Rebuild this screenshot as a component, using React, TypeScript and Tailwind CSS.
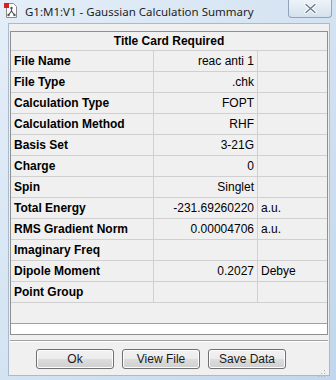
import React from 'react';

type Row = { label: string; value: string; unit?: string };

const rows: Row[] = [
  { label: 'File Name', value: 'reac anti 1' },
  { label: 'File Type', value: '.chk' },
  { label: 'Calculation Type', value: 'FOPT' },
  { label: 'Calculation Method', value: 'RHF' },
  { label: 'Basis Set', value: '3-21G' },
  { label: 'Charge', value: '0' },
  { label: 'Spin', value: 'Singlet' },
  { label: 'Total Energy', value: '-231.69260220', unit: 'a.u.' },
  { label: 'RMS Gradient Norm', value: '0.00004706', unit: 'a.u.' },
  { label: 'Imaginary Freq', value: '' },
  { label: 'Dipole Moment', value: '0.2027', unit: 'Debye' },
  { label: 'Point Group', value: '' },
];

const AppIcon = () => (
  <svg width="14" height="15" viewBox="0 0 14 15">
    <path d="M2.5 0.5h7l3 3v11h-10z" fill="#ffffff" stroke="#8a8a8a" />
    <rect x="0" y="0" width="5" height="5" fill="#d81e1e" />
    <path d="M7.5 5v3M7.5 8l-3 4M7.5 8l3 4" stroke="#555" strokeWidth="1.2" fill="none" />
    <circle cx="7.5" cy="5" r="1.2" fill="#555" />
    <circle cx="4.5" cy="12" r="1.2" fill="#555" />
    <circle cx="10.5" cy="12" r="1.2" fill="#555" />
  </svg>
);

const WinButton = ({ label }: { label: string }) => (
  <button className="w-[78px] h-[20px] rounded-[3px] border border-[#707070] bg-[linear-gradient(to_bottom,#f2f2f2_0%,#ebebeb_50%,#dddddd_51%,#cfcfcf_100%)] text-[12px] text-[#1a1a1a] leading-none shadow-[inset_0_0_0_1px_#fcfcfc]">
    {label}
  </button>
);

const App: React.FC = () => {
  return (
    <div className="w-[336px] h-[380px] overflow-hidden bg-gradient-to-br from-[#e4eef8] via-[#d4e3f2] to-[#c2d7ec] font-['Liberation_Sans',Arial,sans-serif] text-black">
      {/* Title bar */}
      <div className="h-[23px] flex items-start">
        <div className="ml-[4px] mt-[3px]">
          <AppIcon />
        </div>
        <span className="ml-[7px] mt-[4px] text-[11.5px] leading-[16px] font-['Noto_Sans',sans-serif] text-[#1e1e1e]">
          G1:M1:V1 - Gaussian Calculation Summary
        </span>
        <div className="ml-auto mr-[4px] w-[44px] h-[18px] rounded-b-[4px] border border-t-0 border-[#8fa3bb] bg-gradient-to-b from-[#eef3f9] to-[#d5e1ee] flex items-center justify-center">
          <svg width="13" height="11" viewBox="0 0 13 11">
            <path d="M2 1.5L11 9.5M11 1.5L2 9.5" stroke="#ffffff" strokeWidth="3.2" strokeLinecap="round" />
            <path d="M2 1.5L11 9.5M11 1.5L2 9.5" stroke="#6b7a8c" strokeWidth="1.4" strokeLinecap="round" />
          </svg>
        </div>
      </div>

      {/* Client area */}
      <div className="ml-[8px] mr-[6px] h-[353px] bg-[#f0f0f0] border border-[#aab9cb] flex flex-col">
        <div className="mt-[7px] ml-[1px] mr-[1px] h-[304px] shrink-0 border border-[#8e8f8f] flex flex-col bg-[#f0f0f0]">
          <div className="h-[19px] shrink-0 border-b border-[#cfcfcf] flex items-center justify-center text-[12px] font-bold">
            Title Card Required
          </div>
          {rows.map((r) => (
            <div key={r.label} className="h-[21px] shrink-0 border-b border-[#d0d0d0] flex text-[12px]">
              <div className="w-[143px] border-r border-[#d0d0d0] pl-[3px] flex items-center font-bold">
                {r.label}
              </div>
              <div className="w-[104px] border-r border-[#d0d0d0] pr-[3px] flex items-center justify-end">
                {r.value}
              </div>
              <div className="flex-1 pl-[3px] flex items-center">{r.unit ?? ''}</div>
            </div>
          ))}
          <div className="flex-1 border-b border-[#a0a0a0]" />
          <div className="h-[10px] shrink-0 bg-white" />
        </div>

        <div className="mt-[5px] mx-[1px] h-[2px] shrink-0 border-t border-[#a0a0a0] border-b border-b-white" />

        <div className="mt-[7px] flex gap-[8px] pl-[27px] shrink-0">
          <WinButton label="Ok" />
          <WinButton label="View File" />
          <WinButton label="Save Data" />
        </div>

        <div className="flex-1 flex items-end justify-end pr-[3px] pb-[3px]">
          <svg width="9" height="9" viewBox="0 0 9 9">
            <g fill="#b0b0b0">
              <rect x="7" y="1" width="1" height="1" />
              <rect x="4" y="4" width="1" height="1" />
              <rect x="7" y="4" width="1" height="1" />
              <rect x="1" y="7" width="1" height="1" />
              <rect x="4" y="7" width="1" height="1" />
              <rect x="7" y="7" width="1" height="1" />
            </g>
          </svg>
        </div>
      </div>
    </div>
  );
};

export default App;
